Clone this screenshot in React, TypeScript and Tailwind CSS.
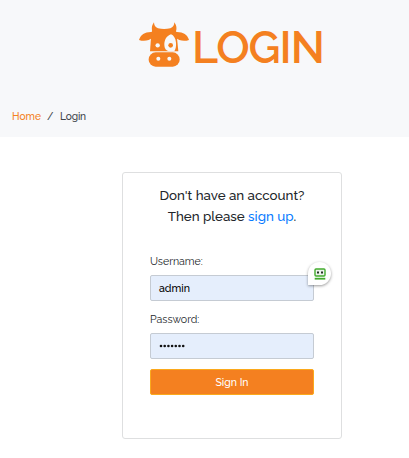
function CowLogo() {
  return (
    <svg viewBox="0 0 150 135" className="h-[45px] w-[50px] shrink-0" fill="#f48020" aria-hidden="true">
      <path d="M45 1C37 12 36 25 44 34H107C115 25 114 12 106 1C106 10 102 16 94 19Q75 23 57 19C49 16 45 10 45 1Z" />
      <path d="M0 54C5 36 20 28 42 30V46C30 57 14 59 0 54Z" />
      <path d="M150 54C145 36 130 28 108 30V46C120 57 136 59 150 54Z" />
      <path d="M39 25H111L114 48L118 88H33L36 48Z" />
      <path d="M96 37C82 42 76 54 76 69C76 79 81 86 90 88H106C110 81 112 72 111 62C110 49 104 40 96 37Z" fill="#f7f8fa" />
      <circle cx="56" cy="70" r="6.5" fill="#f7f8fa" />
      <circle cx="95" cy="70" r="7" />
      <rect x="29" y="91" width="93" height="43" rx="21" />
      <circle cx="58" cy="110" r="6" fill="#f7f8fa" />
      <circle cx="91" cy="110" r="6" fill="#f7f8fa" />
    </svg>
  );
}

function RobotIcon() {
  return (
    <svg viewBox="0 0 12 12" className="h-3 w-3" aria-hidden="true">
      <rect x="1" y="1" width="10" height="7" rx="1" fill="#edf3ed" stroke="#43ac2e" strokeWidth="1.4" />
      <path d="M3 3.5h2v2H3zM7 3.5h2v2H7z" fill="#263326" />
      <path d="M.7 9.8h10.6v1.8H.7z" fill="#43ac2e" />
    </svg>
  );
}

export default function App() {
  return (
    <main className="h-[458px] w-full overflow-hidden bg-white font-['Raleway','Lato',sans-serif] text-[#212529]">
      <header className="flex h-[137px] flex-col bg-[#f7f8fa]">
        <div className="flex h-[92px] pl-[139px] pt-[22px]">
          <CowLogo />
          <h1 className="ml-[3px] mt-px text-[44.5px] font-semibold leading-[48px] tracking-[-1px] text-[#f48020]">LOGIN</h1>
        </div>
        <nav className="flex pl-3 pt-[16px] text-[10.2px] font-medium leading-4">
          <a className="w-[35px] text-[#f48020]">Home</a>
          <span className="w-[13px] text-[#40454a]">/</span>
          <span className="tracking-[-0.15px] text-[#40454a]">Login</span>
        </nav>
      </header>
      <section className="ml-[122px] mt-[35px] h-[267px] w-[220px] rounded-[3px] border border-[#dedfe0] px-[27px]">
        <p className="-mx-5 pt-3 text-center text-[13.35px] font-medium leading-[21px]">
          Don't have an account?<br />Then please <a className="text-[#087bff]">sign up</a>.
        </p>
        <form className="pt-[26px] text-[10.6px]">
          <label className="block h-[22px] leading-4">Username:</label>
          <div className="relative flex h-[26px] items-center rounded-[2px] border border-[#c5cbd3] bg-[#e5eefc] pl-2 text-black">
            <span className="pt-px font-medium">admin</span>
            <span className="absolute -right-[18px] -top-[14px] flex h-[23px] w-[23px] items-center justify-center rounded-full rounded-bl-none bg-white shadow-[0_1px_3px_rgba(0,0,0,0.4)]">
              <RobotIcon />
            </span>
          </div>
          <label className="mt-[10px] block h-[22px] leading-4">Password:</label>
          <div className="flex h-[26px] items-center rounded-[2px] border border-[#c5cbd3] bg-[#e5eefc] pl-2">
            <svg viewBox="0 0 27 4" className="h-1 w-[27px]" aria-hidden="true">
              {Array.from({ length: 7 }, (_, i) => (
                <circle key={i} cx={2 + i * 3.7} cy="2" r="1.3" fill="#111" />
              ))}
            </svg>
          </div>
          <button type="button" className="mt-[10px] block h-[26px] w-full rounded-[2px] border border-[#fba91c] bg-[#f48020] pt-px text-[10.5px] font-medium text-white">Sign In</button>
        </form>
      </section>
    </main>
  );
}
